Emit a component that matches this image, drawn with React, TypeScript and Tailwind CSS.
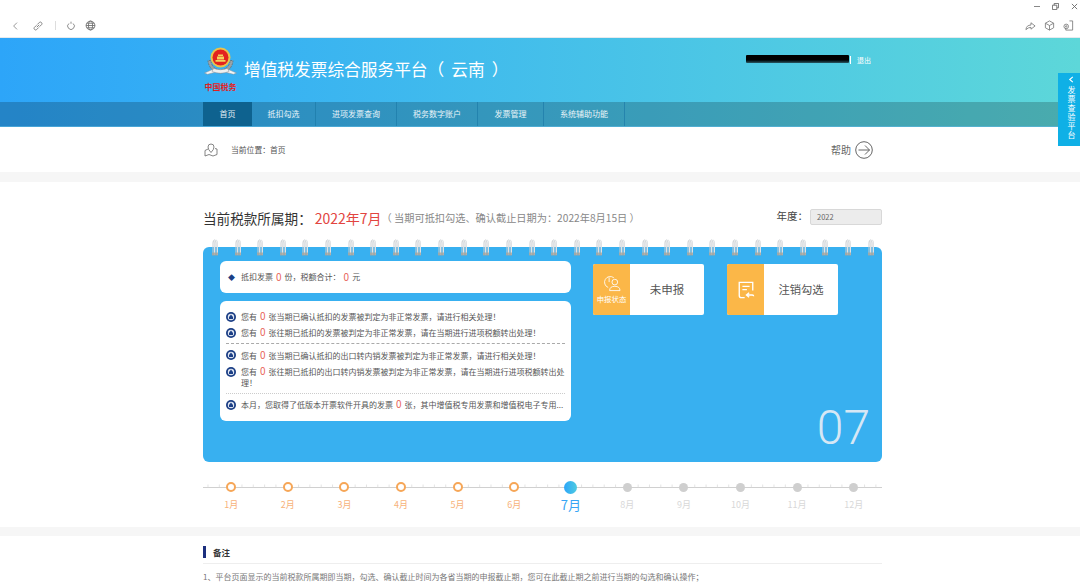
import React from "react";

const font = { fontFamily: '"Noto Sans CJK SC", "Liberation Sans", sans-serif' };

const Bullet = () => (
  <svg viewBox="0 0 10 10" className="w-[10px] h-[10px] shrink-0 mt-[0.5px]">
    <circle cx="5" cy="5" r="5" fill="#1c3f86" />
    <circle cx="5" cy="5" r="3.2" fill="#dfe6f2" />
    <path d="M5 2.4 7 5v2H3V5z" fill="#1c3f86" />
  </svg>
);

const Zero = () => <span className="text-[#e8645a] text-[10px] leading-[6px] mx-[3px]">0</span>;

const Notice = ({ children, cls = "" }: { children: React.ReactNode; cls?: string }) => (
  <div className={`flex gap-[5px] text-[8px] leading-[11px] text-[#555] ${cls}`}>
    <Bullet />
    <div className="min-w-0 flex-1">{children}</div>
  </div>
);

const Ring = () => (
  <svg viewBox="0 0 8 17" className="w-[8px] h-[17px]">
    <path d="M2 16V4q0-3 1.5-3T5 4v12" fill="none" stroke="#c9ccd0" strokeWidth="1" />
    <path d="M3.5 16V4q0-3 1.5-3t1.5 3v12" fill="none" stroke="#dfe2e5" strokeWidth="1" />
    <rect x="1" y="13.500" width="6" height="3" fill="#a9a49a" opacity="0.8" />
  </svg>
);

const months = ["1月", "2月", "3月", "4月", "5月", "6月", "7月", "8月", "9月", "10月", "11月", "12月"];

const Logo = () => (
  <div className="w-[33px] flex flex-col items-center">
    <svg viewBox="0 0 33 33" className="w-[33px] h-[33px]">
      <path d="M16.500 27A13 13 0 0 1 4 14.500h3a9.500 9.500 0 0 0 19 0h3A13 13 0 0 1 16.500 27z" fill="#9aa3a8" stroke="#5f6b70" strokeWidth="0.8" strokeDasharray="1.800 1.100" />
      <circle cx="16.500" cy="11.500" r="10" fill="#e9c44c" />
      <circle cx="16.500" cy="11.500" r="8" fill="#e3231f" />
      <path d="M11.500 14h10v1.800h-10zM13 10.500h7v3h-7zM14 8.400h5v1.600h-5z" fill="#f3d35a" />
      <path d="M0.500 27l8-3.500 2 3-7 1.800zM32.500 27l-8-3.500-2 3 7 1.800z" fill="#f4f5f5" stroke="#8a9199" strokeWidth="0.5" />
      <path d="M8 25.500q8.500 3.500 17 0l-1.500-3q-7 2.500-14 0z" fill="#eef0f0" stroke="#8a9199" strokeWidth="0.5" />
    </svg>
    <span className="text-[#e01f1f] text-[8px] leading-[11px] font-bold whitespace-nowrap mt-[2px]">中国税务</span>
  </div>
);

export default function App() {
  return (
    <div className="w-[1080px] h-[587px] overflow-hidden bg-white relative" style={font}>
      {/* window / browser bar */}
      <div className="h-[38px] border-b border-[#e6eaee] relative flex items-center pl-[11px] pt-[14px] text-[#777]">
        <svg viewBox="0 0 12 12" className="w-[9px] h-[10px]" fill="none" stroke="#777" strokeWidth="1"><path d="M8 1.500 3.500 6 8 10.500" /></svg>
        <svg viewBox="0 0 12 12" className="w-[12px] h-[12px] ml-[12px]" fill="none" stroke="#777" strokeWidth="0.9"><path d="M4.800 7.200 7.200 4.800M4.500 5.300 2.300 7.500a1.600 1.600 0 0 0 2.200 2.200L6.700 7.500M5.300 4.500l2.200-2.200a1.600 1.600 0 0 1 2.200 2.200L7.500 6.700" /></svg>
        <div className="w-px h-[9px] bg-[#ddd] ml-[11px]" />
        <svg viewBox="0 0 12 12" className="w-[10px] h-[10px] ml-[10px]" fill="none" stroke="#777" strokeWidth="1"><path d="M8.500 3a4 4 0 1 1-5 0M6 .8v2.500" /></svg>
        <svg viewBox="0 0 12 12" className="w-[11px] h-[11px] ml-[9px]" fill="none" stroke="#666" strokeWidth="0.9"><circle cx="6" cy="6" r="4.800" /><ellipse cx="6" cy="6" rx="2.200" ry="4.800" /><path d="M1.200 6h9.600M2 3.500h8M2 8.500h8" /></svg>
        <div className="ml-auto mr-[6px] flex items-center gap-[8px]">
          <svg viewBox="0 0 12 12" className="w-[11px] h-[11px]" fill="none" stroke="#777" strokeWidth="0.9"><path d="M1 10.500q.5-5 5.500-5V3l4.500 3.500L6.500 10V8q-3 0-5.500 2.500z" /></svg>
          <svg viewBox="0 0 12 12" className="w-[11px] h-[11px]" fill="none" stroke="#777" strokeWidth="0.9"><path d="M6 1l4.500 2.500v5L6 11 1.500 8.500v-5zM1.500 3.500 6 6l4.500-2.500M6 6v5" /></svg>
          <svg viewBox="0 0 12 12" className="w-[11px] h-[11px]" fill="none" stroke="#777" strokeWidth="0.9"><path d="M7 1h3.500v10H3V8.500" /><circle cx="3.500" cy="7" r="2.500" /><circle cx="3.500" cy="7" r=".8" /></svg>
        </div>
        <div className="absolute top-[3px] right-[2px] flex items-center gap-[12px]">
          <div className="w-[6px] h-px bg-[#888]" />
          <svg viewBox="0 0 8 8" className="w-[7px] h-[7px]" fill="none" stroke="#666"><path d="M2.500 2.500V.5h5v5h-2M.5 2.500h5v5h-5z" /></svg>
          <svg viewBox="0 0 8 8" className="w-[7px] h-[7px]" fill="none" stroke="#666"><path d="M1 1l6 6M7 1 1 7" /></svg>
        </div>
      </div>

      {/* header */}
      <div className="bg-gradient-to-r from-[#2da5f9] to-[#5dd7d9]">
        <div className="h-[64px] flex items-start pl-[204px]">
          <div className="mt-[8px] w-[33px] shrink-0"><Logo /></div>
          <div className="mt-[16px] ml-[7px] text-white text-[16.700px] leading-[30px] whitespace-nowrap">
            增值税发票综合服务平台（<span className="mx-[7px]">云南</span>）
          </div>
          <div className="ml-auto mr-[209px] mt-[17px] flex items-center">
            <div className="w-[103px] h-[8px] bg-gradient-to-b from-black via-black to-[#2b5a66] rounded-[1px] -translate-y-[1px]" />
            <div className="w-px h-[8px] bg-white ml-[1px]" />
            <span className="text-white text-[7px] ml-[6px] leading-[10px]">退出</span>
          </div>
        </div>
        <div className="h-[25px] bg-black/20 border-b border-[#5fb9e2]/60 pl-[203px] flex text-white/90 text-[8px]">
          <div className="w-[49px] bg-[#0e628f] flex items-center justify-center">首页</div>
          {[["抵扣勾选", 64], ["进项发票查询", 81], ["税务数字账户", 81], ["发票管理", 66], ["系统辅助功能", 81]].map(([t, w]) => (
            <div key={t as string} className="flex items-center justify-center border-r border-[#1c7ba8]/70" style={{ width: w as number }}>{t}</div>
          ))}
        </div>
      </div>

      {/* breadcrumb */}
      <div className="h-[45px] pl-[204px] pr-[207px] flex items-center">
        <svg viewBox="0 0 14 14" className="w-[14px] h-[14px]" fill="none" stroke="#666" strokeWidth="0.8">
          <path d="M4 6 1 7.500V13l4-1.500 4 1.500 4-1.500V6l-2-.5" />
          <path d="M7 9.500Q4 6.500 4 4a3 3 0 0 1 6 0q0 2.500-3 5.500z" />
        </svg>
        <span className="text-[#555] text-[7.800px] ml-[13px]">当前位置：首页</span>
        <span className="ml-auto text-[#666] text-[10px]">帮助</span>
        <svg viewBox="0 0 18 18" className="w-[18px] h-[18px] ml-[4px]" fill="none" stroke="#555" strokeWidth="0.9">
          <circle cx="9" cy="9" r="8.300" />
          <path d="M3.500 9h11M10 4.500 14.500 9 10 13.500" />
        </svg>
      </div>

      <div className="h-[10px] bg-[#f6f6f6]" />

      {/* main section */}
      <div className="h-[345px] pl-[203px]">
        <div className="w-[679px]">
          <div className="pt-[25px] h-[58px] flex items-start">
            <span className="text-[#333] text-[13.600px] leading-[22px]">当前税款所属期：</span>
            <span className="text-[#e2453f] text-[14px] leading-[22px] ml-[3px]">2022年7月</span>
            <span className="text-[#888] text-[10.200px] leading-[22px]">（ 当期可抵扣勾选、确认截止日期为：2022年8月15日 ）</span>
            <span className="ml-auto text-[#444] text-[10.500px] leading-[18px] mr-[2px]">年度：</span>
            <div className="w-[72px] h-[16px] mt-[2px] bg-[#ececec] border border-[#d8d8d8] rounded-[2px] text-[#666] text-[7.500px] leading-[14px] pl-[6px]">2022</div>
          </div>

          <div className="mt-[7px] relative h-[215px] bg-[#38b0f0] rounded-[6px] flex pl-[17px] pt-[14px]">
            <div className="absolute -top-[8px] left-[8px] flex gap-[14.620px]">
              {Array.from({ length: 30 }).map((_, i) => <Ring key={i} />)}
            </div>

            <div className="w-[351px]">
              <div className="h-[32px] bg-white rounded-[6px] flex items-center pl-[8px] text-[8px] text-[#555]">
                <span className="text-[#1c3f86] text-[7px] mr-[6px]">◆</span>
                抵扣发票<Zero />份，税额合计：<Zero />元
              </div>
              <div className="mt-[8px] h-[120px] bg-white rounded-[6px] px-[6px] pt-[10px]">
                <Notice>您有<Zero />张当期已确认抵扣的发票被判定为非正常发票，请进行相关处理！</Notice>
                <Notice cls="mt-[5px]">您有<Zero />张往期已抵扣的发票被判定为非正常发票，请在当期进行进项税额转出处理！</Notice>
                <div className="border-t border-dashed border-[#aaa] mt-[5px]" />
                <Notice cls="mt-[5.500px]">您有<Zero />张当期已确认抵扣的出口转内销发票被判定为非正常发票，请进行相关处理！</Notice>
                <Notice cls="mt-[5.500px]">您有<Zero />张往期已抵扣的出口转内销发票被判定为非正常发票，请在当期进行进项税额转出处理！</Notice>
                <div className="border-t border-dotted border-[#ccc] mt-[5px]" />
                <Notice cls="mt-[5px]"><div className="whitespace-nowrap">本月，您取得了低版本开票软件开具的发票<Zero />张，其中增值税专用发票和增值税电子专用...</div></Notice>
              </div>
            </div>

            <div className="ml-[22px] mt-[3px] flex gap-[23px] items-start">
              <div className="w-[111px] h-[51px] bg-white rounded-[2px] flex overflow-hidden">
                <div className="w-[37px] bg-[#fbb748] flex flex-col items-center justify-center text-white">
                  <svg viewBox="0 0 20 18" className="w-[19px] h-[17px]" fill="none" stroke="#fff" strokeWidth="0.9">
                    <path d="M6.500 13.200A6 6 0 1 1 12.500 3M7.500 2.500v5" />
                    <circle cx="13.500" cy="7.500" r="3" />
                    <path d="M8 16.500q0-4.500 5.500-4.500t5.500 4.500z" />
                  </svg>
                  <span className="text-[7.400px] leading-[10px] mt-[2px] whitespace-nowrap">申报状态</span>
                </div>
                <div className="flex-1 flex items-center justify-center text-[#555] text-[11.500px]">未申报</div>
              </div>
              <div className="w-[111px] h-[51px] bg-white rounded-[2px] flex overflow-hidden">
                <div className="w-[37px] bg-[#fbb748] flex items-center justify-center">
                  <svg viewBox="0 0 20 20" className="w-[18px] h-[18px]" fill="none" stroke="#fff" strokeWidth="1.500">
                    <path d="M8.500 18.500H5q-2.500 0-2.500-2.500V1.500h15v9" />
                    <path d="M6 6h8M6 9.500h5" />
                    <path d="M10.500 15.500H17q1.500 0 1.500 1.500M13.500 13l-3 2.500 3 2.500" />
                  </svg>
                </div>
                <div className="flex-1 flex items-center justify-center text-[#555] text-[11.300px]">注销勾选</div>
              </div>
            </div>

            <div className="absolute right-[12px] bottom-[2px] text-[#d6e7f5] text-[48px] leading-[64px] font-light" style={{ fontFamily: 'Roboto, "Liberation Sans", sans-serif' }}>07</div>
          </div>

          {/* timeline */}
          <div className="relative mt-[17px] grid grid-cols-12">
            <svg viewBox="0 0 679 8" className="absolute left-0 top-[4px] w-[679px] h-[8px]" preserveAspectRatio="none">
              <path d="M0 4.500H679" stroke="#d0d0d0" strokeWidth="1.200" />
              {Array.from({ length: 60 }).map((_, i) => (
                <path key={i} d={`M${5 + i * 11.32} 1.500V4.500`} stroke="#d8d8d8" strokeWidth="0.7" />
              ))}
            </svg>
            {months.map((m, i) => {
              const cur = i === 6;
              const past = i < 6;
              return (
                <div key={m} className="relative flex flex-col items-center">
                  <div className="h-[16px] flex items-center">
                    {cur ? (
                      <div className="w-[13px] h-[13px] rounded-full bg-gradient-to-r from-[#2da5f9] to-[#4fcbe0]" />
                    ) : past ? (
                      <div className="w-[10px] h-[10px] rounded-full bg-white border-2 border-[#f6a657]" />
                    ) : (
                      <div className="w-[9px] h-[9px] rounded-full bg-[#cfcfcf]" />
                    )}
                  </div>
                  <span className={cur ? "text-[#38a5f5] text-[13px] leading-[20px] mt-[0px]" : past ? "text-[#f7b27a] text-[9px] leading-[14px] mt-[3px]" : "text-[#d8d8d8] text-[9px] leading-[14px] mt-[3px]"}>{m}</span>
                </div>
              );
            })}
          </div>
        </div>
      </div>

      <div className="h-[9px] bg-[#f6f6f6]" />

      {/* remarks */}
      <div className="pl-[203px] w-[882px]">
        <div className="mt-[10px] flex items-center h-[12px]">
          <div className="w-[3px] h-[12px] bg-[#1c2f7e]" />
          <span className="ml-[7px] text-[#333] text-[8.500px] font-bold">备注</span>
        </div>
        <div className="border-t border-[#eee] mt-[5px]" />
        <div className="mt-[6px] text-[#777] text-[8px] leading-[14px] whitespace-nowrap">1、平台页面显示的当前税款所属期即当期，勾选、确认截止时间为各省当期的申报截止期，您可在此截止期之前进行当期的勾选和确认操作；</div>
      </div>

      {/* side tab */}
      <div className="absolute top-[73px] right-0 w-[22px] h-[73px] bg-[#0fb0e6] text-white flex flex-col items-center pt-[3px] pl-[5px]">
        <svg viewBox="0 0 8 8" className="w-[7px] h-[7px]" fill="none" stroke="#fff" strokeWidth="1.300"><path d="M5.500 1 2 4l3.500 3" /></svg>
        <div className="text-[8px] leading-[9px] w-[9px] mt-[2px] text-center">发票查验平台</div>
      </div>
    </div>
  );
}
